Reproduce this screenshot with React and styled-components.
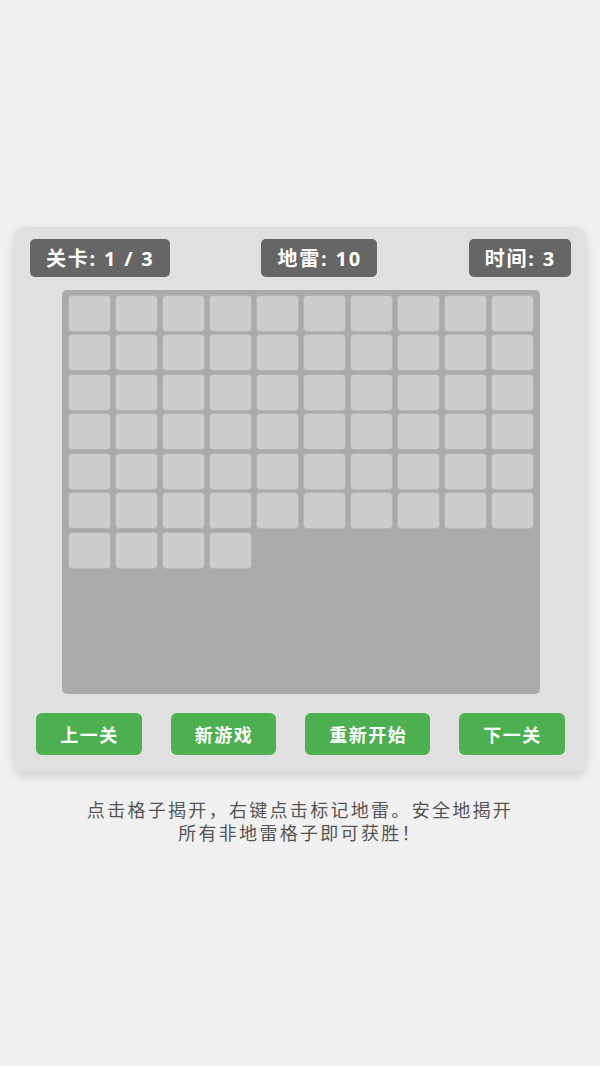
import React from "react";
import styled, { createGlobalStyle } from "styled-components";

const GlobalStyle = createGlobalStyle`
  html, body {
    margin: 0;
    padding: 0;
    background: #f0f0f0;
  }
  body {
    font-family: "Noto Sans", "Noto Sans CJK SC", sans-serif;
  }
`;

const Page = styled.div`
  min-height: 100vh;
  display: flex;
  flex-direction: column;
  align-items: center;
  justify-content: center;
  box-sizing: border-box;
  padding-top: 6px;
`;

const Card = styled.div`
  width: 572px;
  box-sizing: border-box;
  padding: 12px 15px 17px 16px;
  background: #e0e0e0;
  border-radius: 10px;
  box-shadow: 0 4px 10px rgba(0, 0, 0, 0.15);
`;

const Header = styled.div`
  display: flex;
  justify-content: space-between;
  align-items: center;
`;

const Badge = styled.div`
  height: 38px;
  padding: 0 15px 0 16px;
  display: flex;
  align-items: center;
  background: #666666;
  color: #ffffff;
  border-radius: 5px;
  font-size: 20px;
  font-weight: 700;
  letter-spacing: 1.8px;
  white-space: nowrap;
`;

const Board = styled.div`
  width: 478px;
  height: 404px;
  box-sizing: border-box;
  margin: 13px auto 0;
  padding: 5px 6px;
  background: #aaaaaa;
  border-radius: 5px;
  display: grid;
  grid-template-columns: repeat(10, 43px);
  grid-auto-rows: 37px;
  column-gap: 4px;
  row-gap: 2.5px;
  align-content: start;
`;

const Cell = styled.div`
  box-sizing: border-box;
  background: #cdcdcd;
  border: 1px solid #b4b4b4;
  border-radius: 4px;
`;

const Controls = styled.div`
  margin-top: 19px;
  display: flex;
  justify-content: center;
  gap: 29px;
`;

const Button = styled.button`
  height: 42px;
  padding: 0 23px 0 24px;
  border: none;
  border-radius: 6px;
  background: #4caf50;
  color: #ffffff;
  font-family: "Noto Sans", "Noto Sans CJK SC", sans-serif;
  font-size: 18px;
  font-weight: 700;
  letter-spacing: 1.5px;
  cursor: pointer;
`;

const Hint = styled.p`
  max-width: 440px;
  margin: 27px 0 0;
  text-align: center;
  color: #555555;
  font-size: 18px;
  line-height: 23.5px;
  letter-spacing: 2.3px;
`;

const cells = Array.from({ length: 64 }, (_, i) => i);

export default function App() {
  return (
    <>
      <GlobalStyle />
      <Page>
        <Card>
          <Header>
            <Badge>关卡: 1 / 3</Badge>
            <Badge>地雷: 10</Badge>
            <Badge>时间: 3</Badge>
          </Header>
          <Board>
            {cells.map((i) => (
              <Cell key={i} />
            ))}
          </Board>
          <Controls>
            <Button>上一关</Button>
            <Button>新游戏</Button>
            <Button>重新开始</Button>
            <Button>下一关</Button>
          </Controls>
        </Card>
        <Hint>点击格子揭开，右键点击标记地雷。安全地揭开所有非地雷格子即可获胜！</Hint>
      </Page>
    </>
  );
}
